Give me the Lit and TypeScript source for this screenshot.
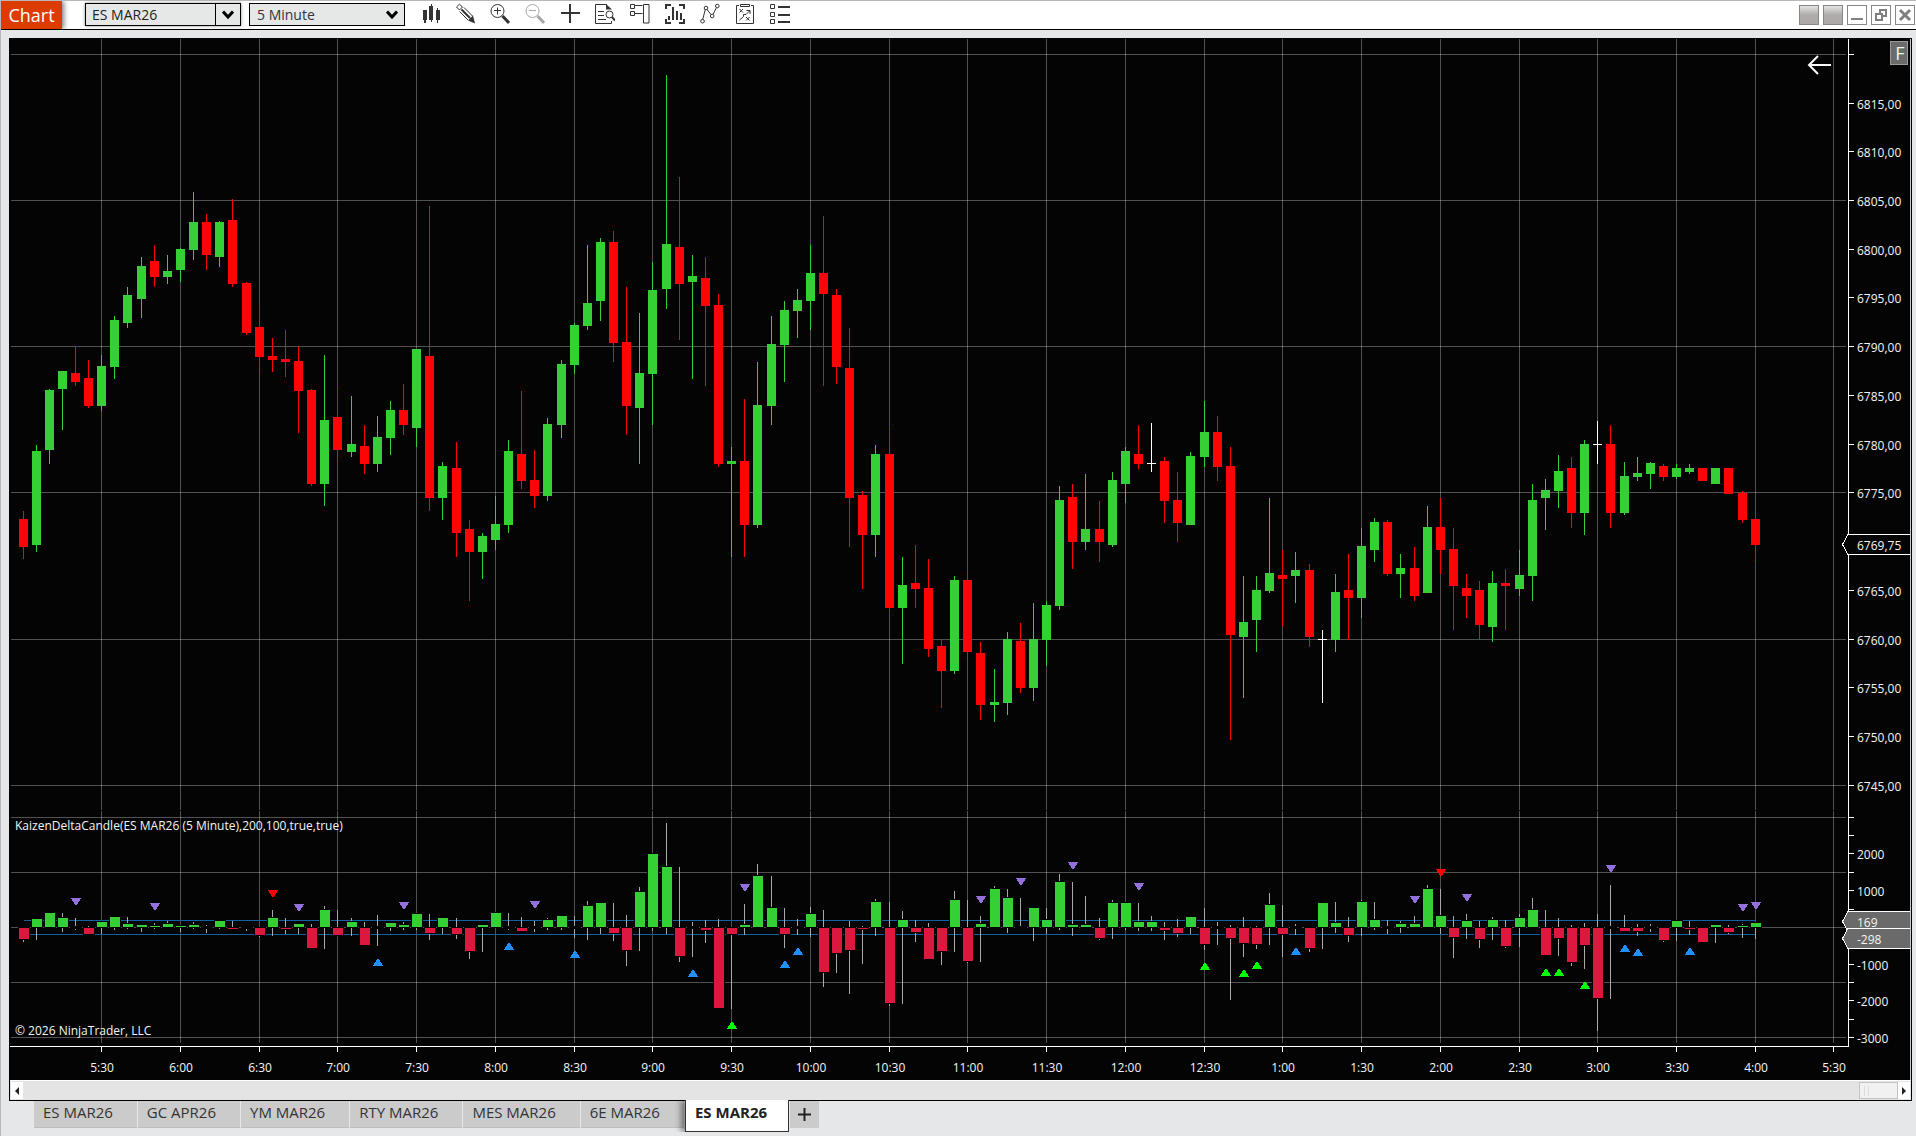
import { LitElement, html, css, svg, nothing } from "lit";
import { customElement, state } from "lit/decorators.js";
import { classMap } from "lit/directives/class-map.js";

type Dir = "g" | "r" | "w";
/** Direction, high, body top, body bottom, low. Levels are in plot units, counted down from ORIGIN. */
type Candle = [Dir, number, number, number, number];
/** High, body edge (0 when the bar has no body), low. The body always starts at the zero line. */
type Delta = [number, number, number];
type MarkKind = "fade" | "sell" | "dip" | "buy";

const ORIGIN = 38;
const PLOT_W = 1903;
const PLOT_H = 1042;
const ZERO = 927;

const CANDLES: Candle[] = [
  ["r", 511, 519, 547, 559], ["g", 445, 451, 545, 552], ["g", 389, 390, 450, 464], ["g", 371, 371, 389, 430],
  ["r", 347, 373, 382, 386], ["r", 360, 378, 406, 408], ["g", 355, 366, 406, 411], ["g", 316, 320, 367, 379],
  ["g", 287, 295, 323, 328], ["g", 257, 266, 299, 318], ["r", 245, 261, 277, 287], ["g", 255, 271, 277, 284],
  ["g", 248, 249, 270, 282], ["g", 192, 222, 250, 260], ["r", 214, 222, 255, 270], ["g", 221, 222, 257, 267],
  ["r", 199, 220, 284, 287], ["r", 282, 283, 333, 335], ["r", 304, 327, 357, 369], ["r", 338, 356, 360, 372],
  ["r", 330, 359, 362, 377], ["r", 347, 361, 391, 433], ["r", 389, 390, 484, 486], ["g", 355, 420, 484, 506],
  ["r", 386, 417, 450, 457], ["g", 396, 444, 452, 457], ["r", 425, 446, 464, 474], ["g", 416, 437, 464, 472],
  ["g", 401, 410, 438, 455], ["r", 384, 410, 425, 435], ["g", 349, 349, 428, 447], ["r", 206, 356, 498, 511],
  ["g", 462, 466, 498, 520], ["r", 442, 468, 533, 557], ["r", 520, 529, 552, 601], ["g", 533, 536, 552, 579],
  ["g", 496, 524, 540, 550], ["g", 440, 451, 525, 533], ["r", 391, 454, 481, 489], ["r", 450, 480, 496, 508],
  ["g", 418, 424, 496, 501], ["g", 360, 364, 425, 438], ["g", 323, 325, 365, 374], ["g", 245, 303, 326, 330],
  ["g", 238, 242, 301, 321], ["r", 231, 242, 343, 362], ["r", 287, 342, 406, 435], ["g", 313, 373, 408, 464],
  ["g", 262, 290, 374, 425], ["g", 75, 244, 289, 309], ["r", 177, 247, 284, 340], ["g", 255, 276, 282, 379],
  ["r", 257, 278, 306, 386], ["r", 294, 305, 464, 467], ["g", 447, 461, 464, 557], ["r", 399, 461, 525, 557],
  ["g", 362, 405, 525, 528], ["g", 316, 344, 406, 425], ["g", 301, 310, 345, 382], ["g", 289, 300, 311, 338],
  ["g", 245, 273, 301, 330], ["r", 216, 273, 294, 386], ["r", 289, 295, 367, 384], ["r", 328, 368, 498, 547],
  ["r", 491, 495, 535, 589], ["g", 445, 454, 535, 557], ["r", 425, 454, 608, 615], ["g", 557, 585, 608, 664],
  ["r", 545, 583, 589, 608], ["r", 559, 588, 649, 657], ["r", 640, 646, 671, 708], ["g", 576, 580, 671, 674],
  ["r", 571, 580, 652, 659], ["r", 642, 653, 705, 720], ["g", 669, 702, 705, 722], ["g", 632, 639, 703, 715],
  ["r", 623, 641, 688, 693], ["g", 603, 639, 688, 701], ["g", 601, 605, 640, 666], ["g", 486, 500, 606, 610],
  ["r", 484, 497, 542, 569], ["g", 474, 529, 542, 550], ["r", 501, 529, 542, 562], ["g", 472, 480, 545, 547],
  ["g", 447, 451, 484, 503], ["r", 425, 454, 464, 469], ["w", 423, 463, 464, 472], ["r", 457, 461, 501, 523],
  ["r", 472, 500, 523, 542], ["g", 452, 456, 525, 525], ["g", 401, 432, 457, 467], ["r", 416, 432, 467, 481],
  ["r", 447, 466, 635, 740], ["g", 576, 622, 637, 698], ["g", 576, 590, 620, 652], ["g", 498, 573, 591, 593],
  ["r", 550, 575, 579, 627], ["g", 552, 570, 576, 603], ["r", 564, 570, 637, 647], ["w", 630, 639, 640, 703],
  ["g", 574, 592, 640, 652], ["r", 554, 590, 598, 640], ["g", 528, 546, 598, 618], ["g", 518, 522, 550, 562],
  ["r", 520, 522, 574, 576], ["g", 554, 568, 574, 598], ["r", 547, 568, 596, 601], ["g", 506, 527, 593, 593],
  ["r", 498, 527, 550, 574], ["r", 528, 549, 586, 630], ["r", 574, 588, 596, 618], ["r", 581, 590, 625, 639],
  ["g", 571, 583, 627, 642], ["r", 569, 583, 586, 630], ["g", 550, 575, 589, 596], ["g", 484, 500, 576, 601],
  ["g", 479, 490, 498, 530], ["g", 455, 471, 491, 508], ["r", 457, 468, 513, 528], ["g", 440, 444, 513, 535],
  ["w", 421, 444, 445, 464], ["r", 425, 444, 513, 528], ["g", 462, 476, 513, 515], ["g", 457, 473, 477, 481],
  ["g", 462, 463, 474, 489], ["r", 464, 466, 477, 481], ["g", 464, 468, 477, 479], ["g", 464, 468, 472, 474],
  ["r", 468, 468, 481, 481], ["g", 468, 468, 484, 484], ["r", 468, 468, 494, 494], ["r", 491, 493, 520, 523],
  ["r", 513, 519, 545, 562],
];

const DELTAS: Delta[] = [
  [927, 939, 942], [919, 919, 940], [913, 913, 927], [913, 918, 932], [918, 0, 930], [926, 934, 934],
  [922, 922, 934], [917, 917, 930], [917, 924, 929], [925, 925, 932], [923, 926, 929], [921, 924, 927],
  [925, 926, 932], [922, 925, 929], [925, 0, 933], [921, 921, 929], [921, 929, 929], [926, 0, 931],
  [927, 935, 937], [910, 918, 936], [918, 929, 934], [924, 924, 934], [924, 948, 948], [906, 910, 949],
  [910, 935, 935], [918, 922, 936], [922, 945, 945], [915, 0, 946], [923, 923, 931], [922, 925, 930],
  [914, 914, 930], [914, 933, 940], [918, 918, 934], [918, 934, 939], [927, 951, 959], [925, 925, 952],
  [913, 913, 927], [913, 0, 930], [917, 931, 931], [921, 0, 932], [918, 920, 930], [916, 916, 930],
  [916, 0, 938], [901, 906, 940], [903, 903, 934], [903, 933, 941], [915, 950, 966], [887, 892, 951],
  [853, 854, 931], [823, 867, 934], [867, 956, 962], [922, 0, 957], [920, 930, 943], [919, 1008, 1008],
  [927, 934, 1009], [904, 925, 935], [864, 876, 927], [876, 908, 927], [908, 934, 948], [919, 0, 935],
  [907, 914, 937], [910, 972, 987], [927, 953, 973], [921, 950, 994], [926, 929, 964], [899, 902, 936],
  [902, 1003, 1006], [911, 920, 1004], [920, 932, 942], [923, 959, 959], [927, 951, 965], [891, 900, 952],
  [900, 961, 963], [916, 924, 962], [886, 889, 927], [889, 898, 933], [898, 0, 927], [908, 908, 941],
  [908, 920, 934], [874, 882, 930], [882, 925, 936], [896, 925, 927], [918, 938, 940], [900, 903, 939],
  [903, 903, 930], [903, 922, 931], [916, 922, 931], [922, 930, 940], [919, 933, 937], [917, 917, 934],
  [908, 944, 950], [922, 0, 945], [925, 938, 1000], [917, 943, 957], [926, 944, 949], [893, 905, 945],
  [905, 934, 957], [924, 0, 935], [927, 948, 952], [903, 903, 949], [902, 923, 933], [917, 935, 942],
  [900, 902, 936], [902, 920, 930], [920, 0, 934], [921, 924, 933], [916, 924, 927], [885, 889, 927],
  [889, 916, 934], [916, 937, 958], [914, 921, 939], [921, 939, 948], [917, 920, 940], [920, 946, 948],
  [914, 918, 947], [898, 910, 927], [910, 955, 955], [918, 938, 956], [925, 962, 966], [923, 945, 969],
  [914, 998, 1031], [885, 0, 999], [915, 931, 931], [924, 931, 936], [924, 0, 932], [927, 940, 942],
  [921, 921, 941], [921, 929, 935], [927, 942, 942], [925, 925, 943], [925, 932, 934], [924, 926, 938],
  [923, 923, 939],
];

const MARKS: [number, number, MarkKind][] = [
  [4, 898, "fade"], [10, 903, "fade"], [19, 890, "sell"], [21, 904, "fade"], [29, 902, "fade"], [39, 901, "fade"],
  [55, 884, "fade"], [73, 896, "fade"], [76, 878, "fade"], [80, 862, "fade"], [85, 883, "fade"], [106, 896, "fade"],
  [108, 869, "sell"], [110, 894, "fade"], [121, 865, "fade"], [131, 904, "fade"], [132, 902, "fade"],
  [27, 959, "dip"], [37, 943, "dip"], [42, 951, "dip"], [51, 970, "dip"], [58, 961, "dip"], [59, 948, "dip"],
  [97, 948, "dip"], [122, 945, "dip"], [123, 949, "dip"], [127, 948, "dip"],
  [54, 1022, "buy"], [90, 963, "buy"], [93, 970, "buy"], [94, 962, "buy"], [116, 969, "buy"], [117, 969, "buy"],
  [119, 982, "buy"],
];

const TIMES = [
  "5:30", "6:00", "6:30", "7:00", "7:30", "8:00", "8:30", "9:00", "9:30", "10:00", "10:30", "11:00",
  "11:30", "12:00", "12:30", "1:00", "1:30", "2:00", "2:30", "3:00", "3:30", "4:00", "5:30",
];

const PRICE_AT_TOP = 6820;
const PRICE_TOP = 54.3;
const PRICE_UNIT = 9.747;
const DELTA_UNIT = 0.03672;

@customElement("trading-chart")
export class TradingChart extends LitElement {
  static styles = css`
    :host {
      display: block;
      flex: 1;
      min-height: 0;
      overflow: hidden;
      background: #040404;
      font-family: "Open Sans", "Noto Sans", sans-serif;
    }
    svg {
      display: block;
      width: 100%;
      height: 100%;
      shape-rendering: crispEdges;
    }
    text {
      font-size: 12px;
      fill: #f4f4f4;
    }
    .mid {
      text-anchor: middle;
    }
    .grid {
      fill: #fff;
      fill-opacity: 0.31;
    }
    .axis {
      fill: #fff;
    }
    .edge {
      fill: #c8c8c8;
    }
    .g {
      fill: #35d035;
    }
    .r {
      fill: #ff0404;
    }
    .w {
      fill: #fff;
    }
    .neg {
      fill: #dc183e;
    }
    .wick {
      fill: #a9a9a9;
    }
    .halo {
      fill: #040404;
    }
    .band {
      fill: #1560a4;
    }
    .fade {
      fill: #9370db;
    }
    .sell {
      fill: #f00;
    }
    .dip {
      fill: #1e90ff;
    }
    .buy {
      fill: #0f0;
    }
    .tag {
      fill: #6a6a6a;
      stroke: #fff;
    }
    .tag.price {
      fill: #040404;
    }
    .arrow {
      fill: none;
      stroke: #fff;
      stroke-width: 2;
      shape-rendering: auto;
    }
    .fixed {
      fill: #6b6b6b;
      stroke: #9a9a9a;
    }
    .fixed-label {
      font-size: 18px;
      text-anchor: middle;
    }
  `;

  @state() private width = PLOT_W;
  @state() private height = PLOT_H;

  private observer = new ResizeObserver(() => this.measure());

  connectedCallback() {
    super.connectedCallback();
    this.observer.observe(this);
  }

  disconnectedCallback() {
    this.observer.disconnect();
    super.disconnectedCallback();
  }

  private measure() {
    if (this.clientWidth && this.clientHeight) {
      this.width = this.clientWidth;
      this.height = this.clientHeight;
    }
  }

  private get axisX() {
    return this.width - 64;
  }

  /** Centre column of a bar. */
  private x(index: number) {
    const spacing = this.axisX / 140.137;
    return Math.floor(14.01 + index * spacing);
  }

  /** Row of a plot level. */
  private y(level: number) {
    return Math.floor((level - ORIGIN) * (this.height / PLOT_H) + 0.001);
  }

  private span(cls: string, x: number, top: number, bottom: number, w: number) {
    const y = this.y(top);
    return svg`<rect class=${cls} x=${x} y=${y} width=${w} height=${Math.max(0, this.y(bottom) - y)}></rect>`;
  }

  private candle([dir, high, top, bottom, low]: Candle, i: number) {
    const x = this.x(i);
    return svg`${this.span(dir, x, high, low, 1)}${this.span(dir, x - 4, top, bottom, 9)}`;
  }

  private delta([high, edge, low]: Delta, i: number) {
    const x = this.x(i);
    const up = edge !== 0 && edge < ZERO;
    const top = up ? edge : ZERO + 1;
    const bottom = up ? ZERO : edge;
    return svg`
      ${this.span("wick", x, high, low, 1)}
      ${edge === 0
        ? this.span("halo", x - 5, ZERO - 1, ZERO + 2, 12)
        : svg`${this.span("halo", x - 5, top - 1, bottom + 1, 12)}${this.span(up ? "g" : "neg", x - 4, top, bottom, 10)}`}`;
  }

  private mark([i, level, kind]: [number, number, MarkKind]) {
    const x = this.x(i) - 4;
    const y = this.y(level);
    const points =
      kind === "fade" || kind === "sell"
        ? `${x},${y} ${x + 10},${y} ${x + 6},${y + 7} ${x + 4},${y + 7}`
        : `${x},${y + 7} ${x + 10},${y + 7} ${x + 6},${y} ${x + 4},${y}`;
    return svg`<polygon class=${kind} points=${points}></polygon>`;
  }

  private tag(cls: string, top: number, bottom: number, label: string) {
    const a = this.y(top) + 0.5;
    const b = this.y(bottom) + 0.5;
    const left = this.axisX;
    const right = this.width - 2;
    const mid = (a + b) / 2;
    return svg`
      <polygon class="tag ${cls}" points="${left - 5.5},${mid} ${left},${a} ${right},${a} ${right},${b} ${left},${b}"></polygon>
      <text x=${left + 9} y=${Math.round(mid) + 5}>${label}</text>`;
  }

  private priceAxis() {
    return Array.from({ length: 16 }, (_, n) => {
      const price = PRICE_AT_TOP - n * 5;
      const y = this.y(PRICE_TOP + n * 5 * PRICE_UNIT);
      return svg`
        ${n % 3 === 0 ? svg`<rect class="grid" x="2" y=${y} width=${this.axisX - 4} height="1"></rect>` : nothing}
        <rect class="axis" x=${this.axisX} y=${y} width="6" height="1"></rect>
        ${n === 0 || price === 6770 ? nothing : svg`<text x=${this.axisX + 9} y=${y + 6}>${price},00</text>`}`;
    });
  }

  private deltaAxis() {
    return Array.from({ length: 13 }, (_, n) => {
      const value = 3000 - n * 500;
      const y = this.y(ZERO + 0.4 - value * DELTA_UNIT);
      const labelled = value % 1000 === 0 && value !== 0 && value !== 3000;
      return svg`
        ${value % 1500 === 0 ? svg`<rect class="grid" x="2" y=${y} width=${this.axisX - 4} height="1"></rect>` : nothing}
        <rect class="axis" x=${this.axisX} y=${y} width="6" height="1"></rect>
        ${labelled ? svg`<text x=${this.axisX + 9} y=${y + 6}>${value}</text>` : nothing}`;
    });
  }

  private timeAxis() {
    return TIMES.map((time, n) => {
      const x = this.x(6 + n * 6);
      return svg`
        ${this.span("grid", x, 39, 810, 1)}
        ${this.span("grid", x, 811, 1043, 1)}
        ${this.span("axis", x, 1046, 1052, 1)}
        <text class="mid" x=${x + 1} y=${this.y(1072)}>${time}</text>`;
    });
  }

  render() {
    const first = this.x(0);
    const last = this.x(CANDLES.length - 1);
    const w = this.width;
    return html`
      <svg role="img" aria-label="ES MAR26, 5 minute candles with cumulative delta">
        ${this.timeAxis()} ${this.priceAxis()} ${this.deltaAxis()}
        ${CANDLES.map((c, i) => this.candle(c, i))}
        ${this.span("band", first + 1, 920, 921, last - first)}
        ${this.span("band", first + 1, 934, 935, last - first)}
        ${DELTAS.map((d, i) => this.delta(d, i))}
        ${MARKS.map((m) => this.mark(m))}
        <text x="6" y=${this.y(830)}>KaizenDeltaCandle(ES MAR26 (5 Minute),200,100,true,true)</text>
        <text x="6" y=${this.y(1035)}>© 2026 NinjaTrader, LLC</text>
        ${this.span("axis", this.axisX, 39, 1047, 1)}
        ${this.span("axis", 1, 1046, 1047, this.axisX)}
        ${this.tag("price", 534, 554, "6769,75")}
        ${this.tag("", 911, 931, "169")}
        ${this.tag("", 928, 948, "-298")}
        <path class="arrow" d="M${w - 81} 27H${w - 103}M${w - 94} 18L${w - 103} 27L${w - 94} 36"></path>
        <rect class="fixed" x=${w - 21.5} y="3.5" width="17" height="23"></rect>
        <text class="fixed-label" x=${w - 12} y="22">F</text>
        <rect class="edge" x=${w - 2} y="1" width="1" height=${this.height}></rect>
      </svg>
    `;
  }
}

const ICONS: Record<string, { label: string; art: unknown; off?: boolean }> = {
  style: {
    label: "Chart style",
    art: svg`<path class="solid" d="M3 7h4v10H6v3H4v-3H3zM11 1h1v2h1v14h-1v2h-1v-2h-2V3h2zM17 5h1v2h2v10h-2v3h-1v-3h-1V7h1z"/>`,
  },
  draw: {
    label: "Drawing tools",
    art: svg`<path class="line" d="M1.500 4L4.500 1.200L7.500 4L4.500 7ZM4.500 8.500L13 17M9 4.500L17.500 13"/><path class="bold" d="M6.500 6.500L15 15"/><path class="solid" d="M13 17.500L18 12.500L20 20.500Z"/>`,
  },
  zoomin: {
    label: "Zoom in",
    art: svg`<circle class="line" cx="7.500" cy="8" r="6.500"/><path class="line" d="M7.500 4.500v7M4 7.500h7"/><path class="thick" d="M12.500 13L19 20"/>`,
  },
  zoomout: {
    label: "Zoom out",
    off: true,
    art: svg`<circle class="line" cx="7.500" cy="8" r="6.500"/><path class="line" d="M4 7.500h7"/><path class="thick" d="M12.500 13L19 20"/>`,
  },
  cross: { label: "Crosshair", art: svg`<path class="bold" d="M10 1v19M1 10h19"/>` },
  data: {
    label: "Data box",
    art: svg`<path class="line" d="M12 1.500H.500V20.500H16.500V18"/><path class="solid" d="M11 1L17 6.500H11Z"/><path class="line" d="M3 8.500h6M3 12.500h6M3 16.500h8"/><circle class="line" cx="14.500" cy="11.500" r="3.500"/><path class="bold" d="M17 14l3 3.500"/>`,
  },
  trader: {
    label: "Chart trader",
    art: svg`<path class="line" d="M.500 1.500h4v4h-4zM.500 8.500h4v4h-4zM4.500 2.500h8M4.500 10.500h8M13.500 1.500h5.500v18.500h-5.500z"/>`,
  },
  series: {
    label: "Data series",
    art: svg`<path class="bold" d="M6 2H1V6M14 2h5V6M6 20H1V16M14 20h5V16"/><path class="solid" d="M3 13h2v4H3zM7 4h2v13H7zM11 8h2v9h-2zM15 10h2v7h-2z"/>`,
  },
  indicators: {
    label: "Indicators",
    art: svg`<path class="line" d="M2.700 16.500L5.300 6.500M7 6.500L11 11.500M13 11.500L16.500 4.500"/><circle class="line" cx="2.500" cy="18.200" r="1.800"/><circle class="line" cx="6" cy="5" r="1.800"/><circle class="line" cx="12.200" cy="13" r="1.800"/><circle class="line" cx="17.300" cy="3" r="1.800"/>`,
  },
  strategies: {
    label: "Strategies",
    art: svg`<path class="line" d="M4 2.500H1.500V20.500H18.500V2.500H16"/><path class="line" d="M5.500 1.500h9v2h-9z"/><path class="line" d="M4.500 6l3.500 3.500M8 6L4.500 9.500M11 14l3.500 3.500M14.500 14L11 17.500M4.500 17L8.500 13.500V11.500H11L14.500 8M11.500 7.500h3.500V11"/>`,
  },
  properties: {
    label: "Properties",
    art: svg`<path class="line" d="M.500 1.500h4v4h-4zM.500 9.500h4v4h-4zM.500 16.500h4v4h-4z"/><path class="bold" d="M8 4h12M8 12h12M8 19h12"/>`,
  },
};

@customElement("app-root")
export class AppRoot extends LitElement {
  static styles = css`
    :host {
      display: flex;
      flex-direction: column;
      box-sizing: border-box;
      height: 100vh;
      border-top: 1px solid #b8b8b8;
      border-left: 1px solid #b8b8bb;
      background: #e6e7e9;
      font-family: "Open Sans", "Noto Sans", sans-serif;
      color: #222;
    }
    button,
    input,
    select {
      margin: 0;
      padding: 0;
      border: 0;
      border-radius: 0;
      font: inherit;
      color: inherit;
    }
    .toolbar {
      display: flex;
      align-items: flex-start;
      height: 28px;
      border-bottom: 1px solid #000;
      background: #fff;
    }
    .badge {
      width: 61px;
      height: 28px;
      line-height: 28px;
      text-align: center;
      font-size: 18px;
      color: #fff;
      background: #dd3c00;
      box-shadow: 2px 0 5px rgba(0, 0, 0, 0.5);
      clip-path: inset(0 -8px 0 0);
    }
    .combo {
      display: flex;
      box-sizing: border-box;
      width: 156px;
      height: 23px;
      margin: 2px 8px 0 23px;
      border: 1px solid #000;
      background: #e6e8e7;
      box-shadow: 0 0 3px rgba(0, 0, 0, 0.45);
    }
    .combo input {
      flex: 1;
      min-width: 0;
      padding-left: 6px;
      background: transparent;
      font-size: 14px;
    }
    .combo button {
      display: grid;
      place-items: center;
      width: 25px;
      border-left: 1px solid #000;
      background: transparent;
    }
    .interval {
      position: relative;
      display: flex;
      width: 156px;
      height: 23px;
      margin: 2px 15px 0 0;
    }
    .interval select {
      appearance: none;
      width: 100%;
      padding-left: 7px;
      border: 1px solid #000;
      background: #e6e8e7;
      font-size: 14px;
      color: #334;
    }
    .interval svg {
      position: absolute;
      right: 7px;
      top: 7px;
      pointer-events: none;
    }
    .chevron {
      fill: none;
      stroke: #000;
      stroke-width: 3;
    }
    .tools {
      display: flex;
      gap: 15px;
      margin-top: 2px;
    }
    .tools button {
      width: 20px;
      height: 22px;
      background: transparent;
      color: #333;
    }
    .tools button:disabled {
      color: #a6a6a6;
    }
    .tools svg {
      display: block;
    }
    .line,
    .bold,
    .thick {
      fill: none;
      stroke: currentColor;
      stroke-width: 1;
    }
    .bold {
      stroke-width: 2;
    }
    .thick {
      stroke-width: 3;
    }
    .solid {
      fill: currentColor;
    }
    .window {
      display: flex;
      gap: 4px;
      margin: 4px 1px 0 auto;
    }
    .window button {
      box-sizing: border-box;
      display: grid;
      place-items: center;
      width: 20px;
      height: 20px;
      border: 1px solid #888;
      background: #fff;
      color: #808080;
    }
    .window .link {
      background: linear-gradient(#e4e2e2, #b0abab 50%, #aea9a9);
    }
    .frame {
      display: flex;
      flex: 1;
      flex-direction: column;
      min-height: 0;
      margin: 8px 4px 0 8px;
      background: #000;
    }
    .scroll {
      display: flex;
      height: 17px;
      margin: 0 1px 1px 1px;
      padding: 1px;
      border-top: 1px solid #fff;
      background: #e4e4e4;
    }
    .scroll button {
      display: grid;
      place-items: center;
      width: 12px;
      background: #fff;
    }
    .scroll input {
      flex: 1;
      min-width: 0;
      appearance: none;
      background: transparent;
    }
    .scroll input::-webkit-slider-thumb {
      appearance: none;
      box-sizing: border-box;
      width: 39px;
      height: 17px;
      border: 1px solid #c4c4c4;
      background:
        linear-gradient(#dcdcdc, #dcdcdc) 4px 3px / 1px 10px no-repeat,
        linear-gradient(#dcdcdc, #dcdcdc) 8px 3px / 1px 10px no-repeat,
        #f1f1f1;
    }
    .tabs {
      display: flex;
      align-items: flex-start;
      gap: 1px;
      height: 35px;
      padding-left: 33px;
    }
    .tab {
      box-sizing: border-box;
      height: 27px;
      padding: 0 24px 4px 9px;
      border-bottom: 1px solid #bdbdbd;
      background: #cbcbcb;
      font-size: 15px;
      line-height: 22px;
      color: #333;
      white-space: nowrap;
    }
    .tab.active {
      position: relative;
      height: 32px;
      margin-top: -1px;
      padding: 1px 21px 8px 9px;
      border: 1px solid #333;
      border-top: 0;
      background: #fff;
      font-weight: 700;
      color: #222;
      box-shadow: -4px 0 6px rgba(0, 0, 0, 0.45);
      clip-path: inset(0 0 0 -12px);
    }
    .tab.add {
      display: grid;
      place-items: center;
      width: 29px;
      padding: 0;
      border: 0;
      color: #222;
    }
  `;

  @state() private active = 6;

  private tabs = ["ES MAR26", "GC APR26", "YM MAR26", "RTY MAR26", "MES MAR26", "6E MAR26", "ES MAR26"];

  private chevron() {
    return html`<svg width="12" height="10" viewBox="0 0 12 10"><path class="chevron" d="M1 1.500L6 7L11 1.500" /></svg>`;
  }

  render() {
    return html`
      <header class="toolbar">
        <div class="badge">Chart</div>
        <div class="combo">
          <input type="text" aria-label="Instrument" value="ES MAR26" />
          <button aria-label="Choose instrument">${this.chevron()}</button>
        </div>
        <div class="interval">
          <select aria-label="Interval">
            <option>5 Minute</option>
          </select>
          ${this.chevron()}
        </div>
        <nav class="tools">
          ${Object.values(ICONS).map(
            (icon) => html`<button aria-label=${icon.label} ?disabled=${icon.off ?? false}>
              <svg width="20" height="22" viewBox="0 0 20 22">${icon.art}</svg>
            </button>`
          )}
        </nav>
        <div class="window">
          <button class="link" aria-label="Instrument link"></button>
          <button class="link" aria-label="Interval link"></button>
          <button aria-label="Minimize">
            <svg width="18" height="18" viewBox="0 0 18 18"><path class="bold" d="M3 13h12" /></svg>
          </button>
          <button aria-label="Restore">
            <svg width="18" height="18" viewBox="0 0 18 18">
              <path class="bold" d="M8 7V4h6v6h-3M4 8h6v6H4z" />
            </svg>
          </button>
          <button aria-label="Close">
            <svg width="18" height="18" viewBox="0 0 18 18"><path class="thick" d="M4 4L14 14M14 4L4 14" /></svg>
          </button>
        </div>
      </header>
      <main class="frame">
        <trading-chart></trading-chart>
        <div class="scroll">
          <button aria-label="Scroll left">
            <svg width="6" height="8" viewBox="0 0 6 8"><path class="solid" d="M5 0V8L1 4Z" /></svg>
          </button>
          <input type="range" aria-label="Scroll position" min="0" max="100" value="100" />
          <button aria-label="Scroll right">
            <svg width="6" height="8" viewBox="0 0 6 8"><path class="solid" d="M1 0V8L5 4Z" /></svg>
          </button>
        </div>
      </main>
      <nav class="tabs">
        ${this.tabs.map(
          (name, i) => html`<button
            class=${classMap({ tab: true, active: i === this.active })}
            @click=${() => (this.active = i)}
          >
            ${name}
          </button>`
        )}
        <button class="tab add" aria-label="Add tab">
          <svg width="13" height="13" viewBox="0 0 13 13"><path class="bold" d="M6.500 0v13M0 6.500h13" /></svg>
        </button>
      </nav>
    `;
  }
}
